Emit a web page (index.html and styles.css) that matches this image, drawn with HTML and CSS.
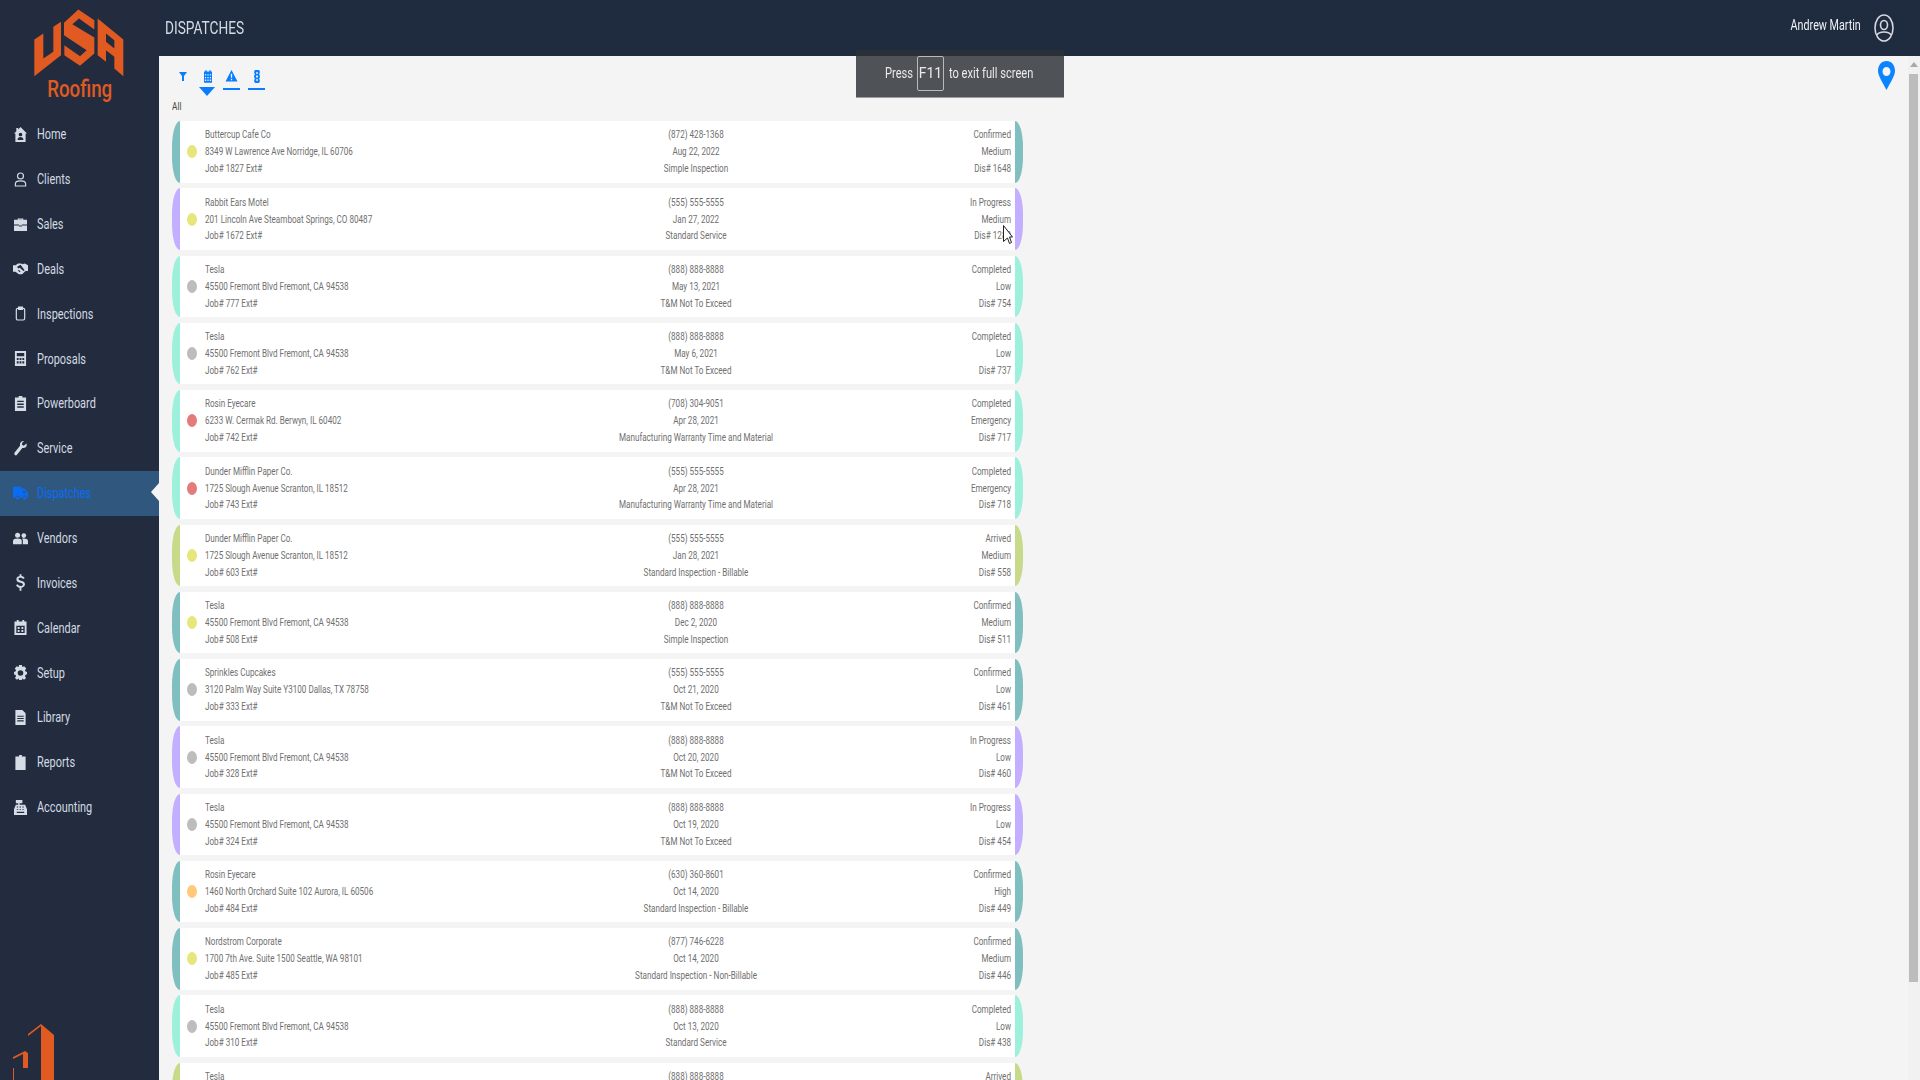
FILE: index.html
```html
<!DOCTYPE html>
<html lang="en">
<head>
<meta charset="utf-8">
<title>Dispatches</title>
<link rel="stylesheet" href="styles.css">
</head>
<body>
<div class="app">
  <aside class="sidebar">
    <div class="brand">
      <svg class="brand-mark" viewBox="0 0 330 230"><path fill-rule="evenodd" d="M28 118L55 100V175L85 155V80L108 65V165L28 228ZM117 68L160 28L208 60V88L162 55L142 72L208 112V160L165 197L118 165V135L165 168L185 150L117 105ZM218 55L295 118V228L268 205V170L243 150V185L218 165ZM243 100L268 120V145L243 125Z"/></svg>
      <span class="brand-name">Roofing</span>
    </div>
    <nav class="nav">
      <a class="nav-item"><svg class="nav-icon" viewBox="0 0 14 16"><path d="M7 0L14 7H12.500V16H1.500V7H0L2.500 4.500V1H4.500V2.500ZM7 6a2 2 0 100 4 2 2 0 000-4ZM3.800 14h6.400c0-2-1.400-3.200-3.200-3.200S3.800 12 3.800 14Z" fill-rule="evenodd"/></svg><span class="nav-label">Home</span></a>
      <a class="nav-item"><svg class="nav-icon outline" viewBox="0 0 14 16"><circle cx="7" cy="4.200" r="3.200"/><path d="M1.500 15v-2.500C1.500 10.500 3.500 9.500 7 9.500s5.500 1 5.500 3V15Z"/></svg><span class="nav-label">Clients</span></a>
      <a class="nav-item"><svg class="nav-icon" viewBox="0 0 14 16"><path d="M4 3V1.500h6V3h4v5H8.500v1h-3V8H0V3ZM5.500 3h3V2.500h-3ZM0 9.200h5.500v1h3v-1H14V15H0Z" fill-rule="evenodd"/></svg><span class="nav-label">Sales</span></a>
      <a class="nav-item"><svg class="nav-icon wide" viewBox="0 0 18 14"><path d="M0 3h3l3-2h4l1 1 3-1 4 2v7h-3l-4 4H7l-4-3H0ZM5 5l4-2.500 5 6.500-1.500 1L8 6l-2 1ZM6 9.500l2 2 1-1-2-2Z" fill-rule="evenodd"/></svg><span class="nav-label">Deals</span></a>
      <a class="nav-item"><svg class="nav-icon outline" viewBox="0 0 14 16"><rect x="2.500" y="2.500" width="9" height="12.500" rx="1.500"/><path d="M5 1h4v2.500H5Z" fill="#d5dce6"/></svg><span class="nav-label">Inspections</span></a>
      <a class="nav-item"><svg class="nav-icon" viewBox="0 0 14 16"><path d="M1 0H13V16H1ZM3 2V5.500H11V2ZM3 7.500V9.500H5V7.500ZM6 7.500V9.500H8V7.500ZM9 7.500V9.500H11V7.500ZM3 11V13.500H5V11ZM6 11V13.500H8V11ZM9 11V13.500H11V11Z" fill-rule="evenodd"/></svg><span class="nav-label">Proposals</span></a>
      <a class="nav-item"><svg class="nav-icon" viewBox="0 0 14 16"><path d="M5 0H9V1.500H13V16H1V1.500H5ZM3.500 5V6.500H10.500V5ZM3.500 8V9.500H10.500V8ZM3.500 11V12.500H10.500V11Z" fill-rule="evenodd"/></svg><span class="nav-label">Powerboard</span></a>
      <a class="nav-item"><svg class="nav-icon" viewBox="0 0 14 16"><path d="M13.500 2.500L10.500 5 8.500 4 9 1.500 11 0C8 -.5 6 2 6.500 5L.5 12.500C-.2 14.500 1.800 16.500 3 15L9 7.500C12 8 14.500 6 13.500 2.500Z"/></svg><span class="nav-label">Service</span></a>
      <a class="nav-item active"><svg class="nav-icon wide" viewBox="0 0 18 16"><path d="M0 1.500Q0 0 1.500 0H10V2H13.500L18 7V13H16.500A2.500 2.500 0 0011.500 13H8A2.500 2.500 0 003 13H0ZM12 4V7.500H16L13 4Z" fill-rule="evenodd"/><circle cx="5.500" cy="13.500" r="2"/><circle cx="14" cy="13.500" r="2"/></svg><span class="nav-label">Dispatches</span></a>
      <a class="nav-item"><svg class="nav-icon wide" viewBox="0 0 18 14"><circle cx="5.500" cy="3.200" r="3"/><circle cx="13" cy="3.500" r="2.800"/><path d="M0 14V10C0 8 2 7 5.500 7S10.500 8 10.500 10V14ZM11.800 14V9.500C11.800 8.500 11.300 7.800 10.800 7.300 11.500 7 12.200 7 13 7 16 7 18 8 18 10V14Z"/></svg><span class="nav-label">Vendors</span></a>
      <a class="nav-item"><svg class="nav-icon" viewBox="0 0 14 18"><path d="M6 0H8V2C9.800 2.200 11 3 11.500 4.500L9.500 5.200C9.200 4.400 8.500 4 7 4 5.500 4 4.800 4.500 4.800 5.300 4.800 6 5.500 6.500 7.500 7 10.300 7.600 11.800 8.800 11.800 11 11.800 13.100 10.300 14.400 8 14.700V18H6V14.700C4 14.400 2.700 13.300 2.200 11.700L4.200 11C4.600 12.100 5.500 12.800 7 12.800 8.700 12.800 9.600 12.200 9.600 11.200 9.600 10.300 8.900 9.800 6.800 9.300 4.200 8.700 2.600 7.700 2.600 5.400 2.600 3.600 3.900 2.300 6 2Z"/></svg><span class="nav-label">Invoices</span></a>
      <a class="nav-item"><svg class="nav-icon" viewBox="0 0 14 16"><path d="M3 0H5V1.500H9V0H11V1.500H13.500V16H.5V1.500H3ZM2.500 6V14H11.500V6ZM4 7.500H6V9.500H4ZM8 7.500H10V9.500H8ZM4 10.800H6V12.800H4ZM8 10.800H10V12.800H8Z" fill-rule="evenodd"/></svg><span class="nav-label">Calendar</span></a>
      <a class="nav-item"><svg class="nav-icon" viewBox="0 0 14 16"><path d="M5.500 0H8.500L9 2.200 11 1.200 13.200 3.800 11.800 5.600 12.500 7 14 7.500V10L12.300 10.600 11.800 12 13 14 10.800 15.800 9 14.500 8.500 16H5.500L5 14.500 3.200 15.800 1 14 2.200 12 1.700 10.600 0 10V7.500L1.500 7 2.200 5.600.8 3.800 3 1.200 5 2.200ZM7 5.500A3 3 0 107 11.500 3 3 0 007 5.500Z" fill-rule="evenodd"/></svg><span class="nav-label">Setup</span></a>
      <a class="nav-item"><svg class="nav-icon" viewBox="0 0 14 16"><path d="M1.500 0H9L12.500 3.500V16H1.500ZM3.500 6V7.200H10.500V6ZM3.500 8.500V9.700H10.500V8.500ZM3.500 11V12.200H10.500V11Z" fill-rule="evenodd"/></svg><span class="nav-label">Library</span></a>
      <a class="nav-item"><svg class="nav-icon" viewBox="0 0 14 16"><path d="M5.500 0H8.500V1.500H12.500V16H1.500V1.500H5.500Z"/></svg><span class="nav-label">Reports</span></a>
      <a class="nav-item"><svg class="nav-icon" viewBox="0 0 14 16"><path d="M2 0H9V3.500H6V5H12L14 10V16H0V10L2 5H4.500V3.500H2ZM3 7V8H4.500V7ZM6 7V8H7.500V7ZM9 7V8H10.500V7ZM3 9.500V10.500H4.500V9.500ZM6 9.500V10.500H7.500V9.500ZM9 9.500V10.500H10.500V9.500ZM3 12.500V14H11V12.500Z" fill-rule="evenodd"/></svg><span class="nav-label">Accounting</span></a>
    </nav>
    <svg class="foot-mark" viewBox="0 0 54 56"><path d="M41 0L54 11V56H41ZM28 10L41 0V2L28 12ZM13 33L25 27 28 29V44H23V30L13 35ZM13 44V56H14V44Z"/></svg>
  </aside>
  <div class="content">
    <header class="topbar">
      <h1 class="page-title">DISPATCHES</h1>
      <div class="user">
        <span class="user-name">Andrew Martin</span>
        <svg class="user-avatar" viewBox="0 0 20 28"><ellipse cx="10" cy="14" rx="9" ry="13"/><ellipse cx="10" cy="11" rx="3.500" ry="4.500"/><path d="M3 21C4 18.500 7 18 10 18S16 18.500 17 21"/></svg>
      </div>
    </header>
    <main class="main">
      <div class="toolbar">
        <div class="tab"><svg class="tab-icon funnel" viewBox="0 0 8 9"><path d="M0 0H8L5 4V9H3V4Z"/></svg></div>
        <div class="tab current"><svg class="tab-icon" viewBox="0 0 9 14"><path d="M1.500 0H3V1.500H6V0H7.500V1.500H9V14H0V1.500H1.500ZM1 4.500V6H2.500V4.500ZM3.800 4.500V6H5.200V4.500ZM6.500 4.500V6H8V4.500ZM1 7.500V9H2.500V7.500ZM3.800 7.500V9H5.200V7.500ZM6.500 7.500V9H8V7.500ZM1 10.500V12H2.500V10.500ZM3.800 10.500V12H5.200V10.500ZM6.500 10.500V12H8V10.500Z" fill-rule="evenodd"/></svg></div>
        <div class="tab marked"><svg class="tab-icon" viewBox="0 0 13 13"><path d="M6.500 0L13 12.500H0ZM5.800 4V8.500H7.200V4ZM5.800 9.500V11H7.200V9.500Z" fill-rule="evenodd"/></svg></div>
        <div class="tab marked"><svg class="tab-icon" viewBox="0 0 8 14"><path d="M2.500 0H5.500Q7 0 7 1.500V3.500L6 4.500 7 5.500V8.500L6 9.500 7 10.500V12.500Q7 14 5.500 14H2.500Q1 14 1 12.500V10.500L2 9.500 1 8.500V5.500L2 4.500 1 3.500V1.500Q1 0 2.500 0ZM3 2.500V4H5V2.500ZM3 6V8H5V6ZM3 10V11.500H5V10Z" fill-rule="evenodd"/></svg></div>
      </div>
      <div class="filter-label">All</div>
      <div class="list">
        <article class="row"><i class="bar teal"></i><div class="card"><b class="dot yellow"></b><div class="col left"><p>Buttercup Cafe Co</p><p>8349 W Lawrence Ave Norridge, IL 60706</p><p>Job# 1827 Ext#</p></div><div class="col mid"><p>(872) 428-1368</p><p>Aug 22, 2022</p><p>Simple Inspection</p></div><div class="col right"><p>Confirmed</p><p>Medium</p><p>Dis# 1648</p></div></div><i class="bar end teal"></i></article>
        <article class="row"><i class="bar purple"></i><div class="card"><b class="dot yellow"></b><div class="col left"><p>Rabbit Ears Motel</p><p>201 Lincoln Ave Steamboat Springs, CO 80487</p><p>Job# 1672 Ext#</p></div><div class="col mid"><p>(555) 555-5555</p><p>Jan 27, 2022</p><p>Standard Service</p></div><div class="col right"><p>In Progress</p><p>Medium</p><p>Dis# 1289</p></div></div><i class="bar end purple"></i></article>
        <article class="row"><i class="bar mint"></i><div class="card"><b class="dot gray"></b><div class="col left"><p>Tesla</p><p>45500 Fremont Blvd Fremont, CA 94538</p><p>Job# 777 Ext#</p></div><div class="col mid"><p>(888) 888-8888</p><p>May 13, 2021</p><p>T&amp;M Not To Exceed</p></div><div class="col right"><p>Completed</p><p>Low</p><p>Dis# 754</p></div></div><i class="bar end mint"></i></article>
        <article class="row"><i class="bar mint"></i><div class="card"><b class="dot gray"></b><div class="col left"><p>Tesla</p><p>45500 Fremont Blvd Fremont, CA 94538</p><p>Job# 762 Ext#</p></div><div class="col mid"><p>(888) 888-8888</p><p>May 6, 2021</p><p>T&amp;M Not To Exceed</p></div><div class="col right"><p>Completed</p><p>Low</p><p>Dis# 737</p></div></div><i class="bar end mint"></i></article>
        <article class="row"><i class="bar mint"></i><div class="card"><b class="dot red"></b><div class="col left"><p>Rosin Eyecare</p><p>6233 W. Cermak Rd. Berwyn, IL 60402</p><p>Job# 742 Ext#</p></div><div class="col mid"><p>(708) 304-9051</p><p>Apr 28, 2021</p><p>Manufacturing Warranty Time and Material</p></div><div class="col right"><p>Completed</p><p>Emergency</p><p>Dis# 717</p></div></div><i class="bar end mint"></i></article>
        <article class="row"><i class="bar mint"></i><div class="card"><b class="dot red"></b><div class="col left"><p>Dunder Mifflin Paper Co.</p><p>1725 Slough Avenue Scranton, IL 18512</p><p>Job# 743 Ext#</p></div><div class="col mid"><p>(555) 555-5555</p><p>Apr 28, 2021</p><p>Manufacturing Warranty Time and Material</p></div><div class="col right"><p>Completed</p><p>Emergency</p><p>Dis# 718</p></div></div><i class="bar end mint"></i></article>
        <article class="row"><i class="bar green"></i><div class="card"><b class="dot yellow"></b><div class="col left"><p>Dunder Mifflin Paper Co.</p><p>1725 Slough Avenue Scranton, IL 18512</p><p>Job# 603 Ext#</p></div><div class="col mid"><p>(555) 555-5555</p><p>Jan 28, 2021</p><p>Standard Inspection - Billable</p></div><div class="col right"><p>Arrived</p><p>Medium</p><p>Dis# 558</p></div></div><i class="bar end green"></i></article>
        <article class="row"><i class="bar teal"></i><div class="card"><b class="dot yellow"></b><div class="col left"><p>Tesla</p><p>45500 Fremont Blvd Fremont, CA 94538</p><p>Job# 508 Ext#</p></div><div class="col mid"><p>(888) 888-8888</p><p>Dec 2, 2020</p><p>Simple Inspection</p></div><div class="col right"><p>Confirmed</p><p>Medium</p><p>Dis# 511</p></div></div><i class="bar end teal"></i></article>
        <article class="row"><i class="bar teal"></i><div class="card"><b class="dot gray"></b><div class="col left"><p>Sprinkles Cupcakes</p><p>3120 Palm Way Suite Y3100 Dallas, TX 78758</p><p>Job# 333 Ext#</p></div><div class="col mid"><p>(555) 555-5555</p><p>Oct 21, 2020</p><p>T&amp;M Not To Exceed</p></div><div class="col right"><p>Confirmed</p><p>Low</p><p>Dis# 461</p></div></div><i class="bar end teal"></i></article>
        <article class="row"><i class="bar purple"></i><div class="card"><b class="dot gray"></b><div class="col left"><p>Tesla</p><p>45500 Fremont Blvd Fremont, CA 94538</p><p>Job# 328 Ext#</p></div><div class="col mid"><p>(888) 888-8888</p><p>Oct 20, 2020</p><p>T&amp;M Not To Exceed</p></div><div class="col right"><p>In Progress</p><p>Low</p><p>Dis# 460</p></div></div><i class="bar end purple"></i></article>
        <article class="row"><i class="bar purple"></i><div class="card"><b class="dot gray"></b><div class="col left"><p>Tesla</p><p>45500 Fremont Blvd Fremont, CA 94538</p><p>Job# 324 Ext#</p></div><div class="col mid"><p>(888) 888-8888</p><p>Oct 19, 2020</p><p>T&amp;M Not To Exceed</p></div><div class="col right"><p>In Progress</p><p>Low</p><p>Dis# 454</p></div></div><i class="bar end purple"></i></article>
        <article class="row"><i class="bar teal"></i><div class="card"><b class="dot orange"></b><div class="col left"><p>Rosin Eyecare</p><p>1460 North Orchard Suite 102 Aurora, IL 60506</p><p>Job# 484 Ext#</p></div><div class="col mid"><p>(630) 360-8601</p><p>Oct 14, 2020</p><p>Standard Inspection - Billable</p></div><div class="col right"><p>Confirmed</p><p>High</p><p>Dis# 449</p></div></div><i class="bar end teal"></i></article>
        <article class="row"><i class="bar teal"></i><div class="card"><b class="dot yellow"></b><div class="col left"><p>Nordstrom Corporate</p><p>1700 7th Ave. Suite 1500 Seattle, WA 98101</p><p>Job# 485 Ext#</p></div><div class="col mid"><p>(877) 746-6228</p><p>Oct 14, 2020</p><p>Standard Inspection - Non-Billable</p></div><div class="col right"><p>Confirmed</p><p>Medium</p><p>Dis# 446</p></div></div><i class="bar end teal"></i></article>
        <article class="row"><i class="bar mint"></i><div class="card"><b class="dot gray"></b><div class="col left"><p>Tesla</p><p>45500 Fremont Blvd Fremont, CA 94538</p><p>Job# 310 Ext#</p></div><div class="col mid"><p>(888) 888-8888</p><p>Oct 13, 2020</p><p>Standard Service</p></div><div class="col right"><p>Completed</p><p>Low</p><p>Dis# 438</p></div></div><i class="bar end mint"></i></article>
        <article class="row"><i class="bar green"></i><div class="card"><b class="dot gray"></b><div class="col left"><p>Tesla</p><p>45500 Fremont Blvd Fremont, CA 94538</p><p>Job# 305 Ext#</p></div><div class="col mid"><p>(888) 888-8888</p><p>Oct 12, 2020</p><p>Standard Service</p></div><div class="col right"><p>Arrived</p><p>Low</p><p>Dis# 431</p></div></div><i class="bar end green"></i></article>
      </div>
      <svg class="map-pin" viewBox="0 0 17 29"><path fill-rule="evenodd" d="M8.500 0C13.500 0 17 4 17 10 17 15 12 22 8.500 29 5 22 0 15 0 10 0 4 3.500 0 8.500 0ZM8.500 6C6.300 6 4.500 8 4.500 10.500S6.300 15 8.500 15 12.500 13 12.500 10.500 10.700 6 8.500 6Z"/></svg>
      <div class="scrollbar"><span class="scroll-up"></span><span class="scroll-thumb"></span></div>
    </main>
  </div>
</div>
<div class="fs-toast"><span class="fs-text press">Press</span><kbd class="fs-key">F11</kbd><span class="fs-text exit">to exit full screen</span></div>
<svg class="cursor" viewBox="0 0 10 19"><path d="M.5.5L9.500 12H6.500L8.500 17.500 6.500 18.500 4.500 13 .5 16.500Z"/></svg>
</body>
</html>
```
FILE: styles.css
```css
* { box-sizing: border-box; }
html, body { margin: 0; height: 100%; overflow: hidden; }
body { font-family: Roboto, "Liberation Sans", sans-serif; background: #f4f4f4; }
p, h1 { margin: 0; }

.app { display: flex; width: 1920px; height: 1080px; filter: blur(.35px); }

/* Sidebar */
.sidebar { width: 159px; flex: none; background: #222c3e; display: flex; flex-direction: column; height: 1080px; overflow: hidden; }
.brand { height: 112px; display: flex; flex-direction: column; align-items: center; }
.brand-mark { width: 110px; height: 77px; fill: #e05a22; flex: none; }
.brand-name { color: #e05a22; font-size: 24px; font-weight: 500; line-height: 24px; transform: scaleX(.78); }
.nav { display: flex; flex-direction: column; }
.nav-item { height: 44.85px; display: flex; align-items: center; padding-left: 14px; position: relative; color: #d3dae3; }
.nav-icon { width: 13px; height: 17px; fill: #d5dce6; flex: none; margin-right: 10px; }
.nav-icon.wide { width: 15px; margin-left: -1px; margin-right: 9px; }
.nav-icon.outline { fill: none; stroke: #d5dce6; stroke-width: 1.3; }
.nav-label { font-size: 14px; transform: scaleX(.78); transform-origin: left center; white-space: nowrap; }
.nav-item.active { background: #30587f; color: #0a6cf5; }
.nav-item.active .nav-icon { fill: #0a6cf5; }
.nav-item.active::after { content: ""; position: absolute; right: 0; top: 12px; border-style: solid; border-width: 9px 8px 9px 0; border-color: transparent #f4f4f4 transparent transparent; }
.foot-mark { width: 54px; height: 56px; fill: #e05a22; margin-top: auto; flex: none; }

/* Top bar */
.content { flex: 1; display: flex; flex-direction: column; min-width: 0; }
.topbar { height: 56px; flex: none; background: #1f2b3e; display: flex; align-items: center; justify-content: space-between; padding: 0 25px 0 6px; }
.page-title { font-size: 18px; font-weight: 400; color: #d3dae3; transform: scaleX(.76); transform-origin: left center; position: relative; top: -1px; }
.user { display: flex; align-items: center; }
.user-name { font-size: 14.5px; color: #eef2f6; transform: scaleX(.74); transform-origin: right center; margin-right: 14px; position: relative; top: -3px; white-space: nowrap; }
.user-avatar { width: 20px; height: 28px; fill: none; stroke: #d5d8dc; stroke-width: 1.6; flex: none; position: relative; left: -1px; }

/* Main */
.main { flex: 1; position: relative; padding: 14px 0 0 13px; overflow: hidden; background: #f4f4f4; }
.toolbar { display: flex; gap: 8px; height: 29px; padding-left: 2px; }
.tab { width: 17px; display: flex; flex-direction: column; align-items: center; position: relative; }
.tab-icon { width: 8px; height: 13px; fill: #0a7cff; flex: none; }
.tab:nth-child(3) { margin-left: -1px; }
.tab:nth-child(3) .tab-icon { width: 13px; height: 12px; }
.funnel { height: 9px; margin-top: 2px; }
.tab.marked::after { content: ""; position: absolute; left: 0; right: 0; top: 18px; height: 1.5px; background: #0a7cff; }
.tab.current::after { content: ""; position: absolute; left: 0; top: 17px; border-style: solid; border-width: 9px 8.5px 0; border-color: #0a7cff transparent transparent; }
.filter-label { font-size: 11.5px; line-height: 14px; color: #444; transform: scaleX(.72); transform-origin: left center; margin-bottom: 8px; }

.list { width: 851px; display: flex; flex-direction: column; gap: 5.75px; }
.row { height: 61.5px; display: flex; flex: none; }
.bar { width: 8px; flex: none; border-radius: 8px 0 0 8px / 26px 0 0 26px; }
.bar.end { border-radius: 0 8px 8px 0 / 0 26px 26px 0; }
.teal { background: #7fbfbf; }
.purple { background: #c4aeff; }
.mint { background: #9df0dc; }
.green { background: #c7da8a; }
.card { flex: 1; background: #fff; display: grid; grid-template-columns: 25px 360px 262px 1fr; align-items: center; padding-right: 4px; }
.dot { width: 10px; height: 13px; border-radius: 50%; margin-left: 7px; }
.yellow { background: #e6e67a; }
.gray { background: #bdbdbd; }
.red { background: #e57a7a; }
.orange { background: #ffc977; }
.col { font-size: 11.5px; line-height: 16.9px; color: #6f6f6f; white-space: nowrap; }
.left { transform: scaleX(.705); transform-origin: left center; }
.mid { text-align: center; transform: scaleX(.705); transform-origin: center; }
.right { text-align: right; transform: scaleX(.705); transform-origin: right center; }

.map-pin { position: absolute; top: 5px; right: 25px; width: 17px; height: 29px; fill: #0a84ff; }
.scrollbar { position: absolute; top: 0; right: 0; bottom: 0; width: 12px; background: #f1f1f1; }
.scroll-up { position: absolute; top: 6px; left: 2px; border-style: solid; border-width: 0 4px 5px; border-color: transparent transparent #a8a8a8; }
.scroll-thumb { position: absolute; top: 18px; left: 1px; width: 9px; height: 908px; background: #bcbcbc; }

/* Browser overlays */
.fs-toast { position: fixed; left: 856px; top: 50px; width: 208px; height: 48px; background: #4f5256; border-top: 6px solid #2a2f38; border-bottom: 1px solid #9a9da0; display: flex; align-items: center; padding: 0 0 7px 29px; color: #e9eaeb; filter: blur(.3px); }
.fs-text { font-size: 15px; transform: scaleX(.74); transform-origin: left center; white-space: nowrap; }
.press { width: 32px; flex: none; }
.exit { flex: none; margin-left: 5px; }
.fs-key { font-family: Roboto, "Liberation Sans", sans-serif; font-size: 14px; width: 27px; height: 35px; flex: none; border: 1px solid #b8babc; border-radius: 2px; display: flex; align-items: center; justify-content: center; }
.cursor { position: fixed; left: 1003px; top: 225px; width: 10px; height: 19px; fill: #fff; stroke: #222; stroke-width: 1; }
```
